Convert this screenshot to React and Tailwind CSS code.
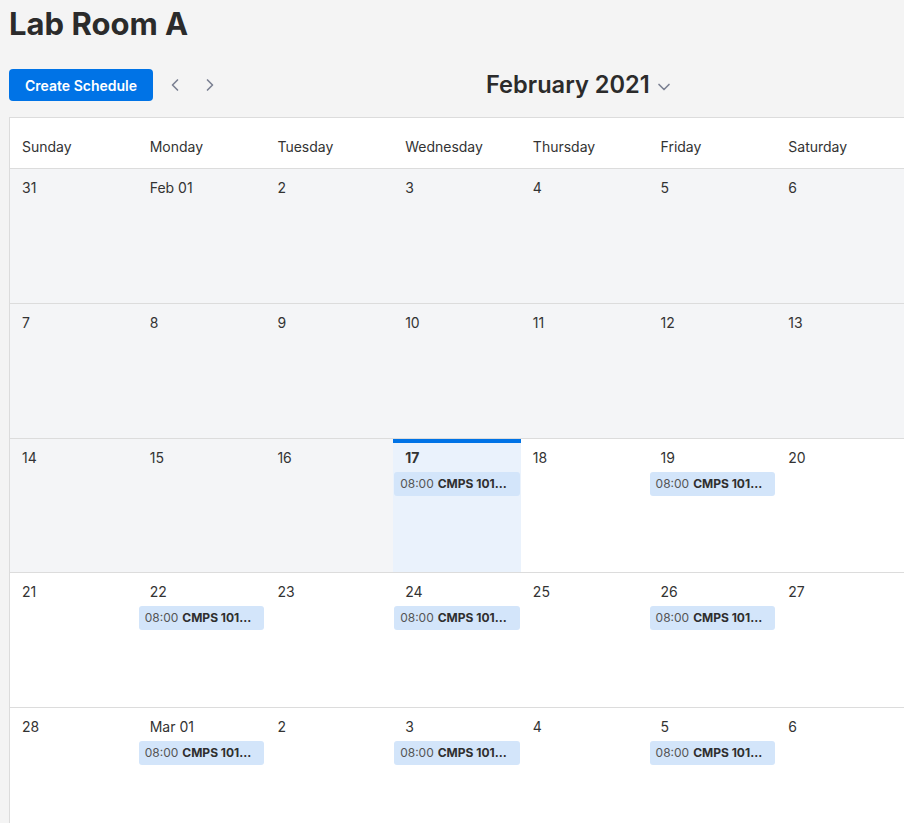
import React from 'react';
import { ChevronLeft, ChevronRight, ChevronDown } from 'lucide-react';

const dayNames = ['Sunday', 'Monday', 'Tuesday', 'Wednesday', 'Thursday', 'Friday', 'Saturday'];

// state: past | today | future
const weeks = [
  [['31', 'past'], ['Feb 01', 'past'], ['2', 'past'], ['3', 'past'], ['4', 'past'], ['5', 'past'], ['6', 'past']],
  [['7', 'past'], ['8', 'past'], ['9', 'past'], ['10', 'past'], ['11', 'past'], ['12', 'past'], ['13', 'past']],
  [['14', 'past'], ['15', 'past'], ['16', 'past'], ['17', 'today', true], ['18', 'future'], ['19', 'future', true], ['20', 'future']],
  [['21', 'future'], ['22', 'future', true], ['23', 'future'], ['24', 'future', true], ['25', 'future'], ['26', 'future', true], ['27', 'future']],
  [['28', 'future'], ['Mar 01', 'future', true], ['2', 'future'], ['3', 'future', true], ['4', 'future'], ['5', 'future', true], ['6', 'future']]
];

function EventChip() {
  return <div className="mx-px mt-1 h-6 rounded-[3px] bg-[#d3e5fa] px-[6px] flex items-center text-[12px] text-[#555] whitespace-nowrap overflow-hidden">
      <span>08:00</span>
      <span className="ml-1 font-bold text-[#2f2f2f]">CMPS 101...</span>
    </div>;
}

function DayCell({ label, state, hasEvent }) {
  const bg = state === 'past' ? 'bg-[#f4f5f7]' : state === 'today' ? 'bg-[#eaf2fc] shadow-[inset_0_4px_0_#0073e6]' : 'bg-white';
  return <div className={`${bg} pt-[9px]`}>
      <div className={`px-3 text-[14px] leading-5 text-[#333] ${state === 'today' ? 'font-bold' : ''}`}>{label}</div>
      {hasEvent && <EventChip />}
    </div>;
}

export default function App() {
  return <div className="min-h-screen bg-[#f4f4f4] overflow-hidden" style={{
    fontFamily: 'Inter, "Noto Sans", sans-serif'
  }}>
      {/* title */}
      <h1 className="pl-[9px] pt-[6px] text-[31px] leading-9 font-bold text-[#2b2b2b]">Lab Room A</h1>

      {/* toolbar */}
      <div className="mt-[27px] pl-[9px] flex items-center h-8">
        <button className="h-8 px-4 rounded bg-[#0073e6] text-white text-[14px] font-semibold">
          Create Schedule
        </button>
        <button className="ml-[6px] w-8 h-8 flex items-center justify-center text-[#7b8092]">
          <ChevronLeft size={20} strokeWidth={2} />
        </button>
        <button className="ml-[3px] w-8 h-8 flex items-center justify-center text-[#7b8092]">
          <ChevronRight size={20} strokeWidth={2} />
        </button>
        <div className="ml-[260px] flex items-center">
          <span className="text-[23.6px] font-semibold text-[#2b2b2b]">February 2021</span>
          <ChevronDown size={20} strokeWidth={2} className="ml-[4px] mt-1 text-[#7b8092]" />
        </div>
      </div>

      {/* calendar */}
      <div className="mt-4 ml-[9px] w-[895px] border-l border-t border-[#dcdcdc] bg-white">
        <div className="grid grid-cols-7 h-[51px] border-b border-[#dcdcdc]">
          {dayNames.map(d => <div key={d} className="px-3 pt-[6px] flex items-center text-[14px] text-[#333]">{d}</div>)}
        </div>
        {weeks.map((week, i) => <div key={i} className="grid grid-cols-7 h-[134.75px] border-b border-[#dcdcdc]">
            {week.map(([label, state, ev], j) => <DayCell key={j} label={label} state={state} hasEvent={ev} />)}
          </div>)}
      </div>
    </div>;
}
